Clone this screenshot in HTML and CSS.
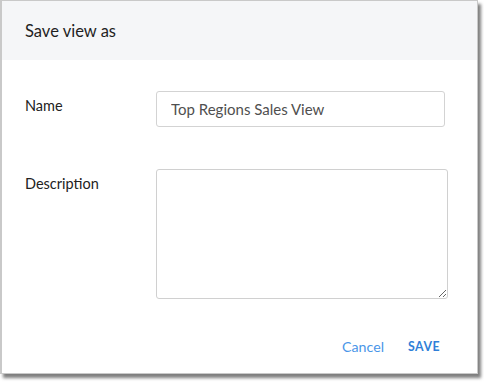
FILE: index.html
```html
<!DOCTYPE html>
<html lang="en">
<head>
    <meta charset="UTF-8">
    <title>Save view as</title>
<link rel="stylesheet" href="styles.css">
</head>
<body>
    <div class="dialog">
        <div class="dialog-header">Save view as</div>
        <div class="dialog-body">
            <div class="field name-field">
                <label class="field-label" for="viewName">Name</label>
                <input class="text-input" id="viewName" type="text" value="Top Regions Sales View">
            </div>
            <div class="field">
                <label class="field-label" for="viewDesc">Description</label>
                <textarea class="text-area" id="viewDesc"></textarea>
            </div>
        </div>
        <div class="dialog-footer">
            <button class="btn btn-cancel">Cancel</button>
            <button class="btn btn-save">SAVE</button>
        </div>
    </div>
</body>
</html>
```

FILE: styles.css
```css
* {
    margin: 0;
    padding: 0;
    box-sizing: border-box;
}

body {
    font-family: 'Lato', 'Open Sans', sans-serif;
    background: #FFFFFF;
    color: #222222;
    padding-bottom: 8px;
}

.dialog {
    width: 478px;
    height: 374px;
    background: #FFFFFF;
    border: 1px solid #C9C9C9;
    border-left-width: 2px;
    box-shadow: 3px 4px 3px rgba(0, 0, 0, 0.5);
    display: flex;
    flex-direction: column;
}

.dialog-header {
    height: 59px;
    background: #F5F6F8;
    padding: 0 23px;
    display: flex;
    align-items: center;
    font-size: 16.5px;
    color: #1F1F1F;
}

.dialog-body {
    padding: 31px 0 0 23px;
    display: flex;
    flex-direction: column;
    gap: 42px;
}

.field {
    display: flex;
    align-items: flex-start;
}

.field-label {
    width: 131px;
    flex-shrink: 0;
    padding-top: 5px;
    line-height: 20px;
    font-size: 14.5px;
    color: #222222;
}

.text-input {
    width: 289px;
    height: 36px;
    border: 1px solid #D3D3D3;
    border-radius: 3px;
    padding: 0 14px;
    font-family: inherit;
    font-size: 15px;
    color: #4F4F4F;
    outline: none;
}

.text-area {
    width: 292px;
    height: 130px;
    border: 1px solid #D0D0D0;
    border-radius: 3px;
    font-family: inherit;
    font-size: 15px;
    resize: both;
    outline: none;
}

.dialog-footer {
    margin-top: auto;
    height: 36px;
    display: flex;
    justify-content: flex-end;
    align-items: flex-start;
    gap: 24px;
    padding-right: 37px;
}

.btn {
    background: none;
    border: none;
    font-family: inherit;
    cursor: pointer;
    line-height: 20px;
}

.btn-cancel {
    font-size: 14.2px;
    color: #4A96E8;
}

.btn-save {
    font-size: 12.3px;
    font-weight: 700;
    letter-spacing: 0.5px;
    color: #2F7FD8;
}
```
